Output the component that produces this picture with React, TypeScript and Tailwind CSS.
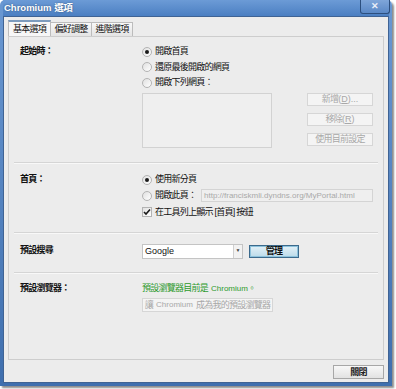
import type { ReactNode } from "react";

const font = "font-['Liberation_Sans','Noto_Sans_CJK_TC',sans-serif]";
// CJK glyphs in the reference have a ~8px advance
const cjk = "text-[9px] tracking-[-0.75px] leading-none";

function Radio({ checked, label }: { checked?: boolean; label: string }) {
  return (
    <div className="flex items-center gap-[3px] whitespace-nowrap">
      <span className="flex h-[10px] w-[10px] shrink-0 items-center justify-center rounded-full border border-[#b3b3b3] bg-gradient-to-br from-[#e0e0e0] to-[#ffffff]">
        {checked && <span className="h-[4px] w-[4px] rounded-full bg-[#1a1a1a]" />}
      </span>
      <span className={`${cjk} text-[#111]`}>{label}</span>
    </div>
  );
}

function DisabledButton({ children, className }: { children: ReactNode; className?: string }) {
  return (
    <div
      className={`flex items-center justify-center whitespace-nowrap border border-[#d6d6d6] bg-[#f4f4f4] text-[9px] leading-none text-[#a8a8a8] ${className ?? ""}`}
    >
      {children}
    </div>
  );
}

function Section({ label, children, className }: { label: string; children: ReactNode; className?: string }) {
  return (
    <div className={`flex pl-[11px] ${className ?? ""}`}>
      <div className="flex h-[15px] w-[122px] shrink-0 items-center whitespace-nowrap">
        <span className={`${cjk} font-bold text-[#111]`}>{label}</span>
      </div>
      <div className="flex flex-col">{children}</div>
    </div>
  );
}

function Divider() {
  return <div className="mx-[5px] h-[2px] border-t border-[#d5d5d5] border-b border-b-[#f8f8f8]" />;
}

function Tab({ label, active, className }: { label: string; active?: boolean; className?: string }) {
  return active ? (
    <div className={`flex h-[16px] items-center justify-center border border-b-0 border-[#bcbcbc] border-t-2 border-t-[#7c9bbd] bg-[#f7f7f7] ${className ?? ""}`}>
      <span className={`${cjk} text-[#111]`}>{label}</span>
    </div>
  ) : (
    <div className={`flex h-[14px] items-center justify-center border border-b-0 border-l-0 border-[#bcbcbc] bg-gradient-to-b from-[#f8f8f8] to-[#e4e4e4] ${className ?? ""}`}>
      <span className={`${cjk} text-[#111]`}>{label}</span>
    </div>
  );
}

export default function App() {
  return (
    <div className={`h-[389px] w-[396px] bg-white ${font}`}>
      <div className="flex h-[386px] w-[392px] flex-col rounded-t-[5px] bg-gradient-to-b from-[#6a98d2] to-[#3f6fae] px-[3px] pb-[3px] shadow-[2px_2px_2px_rgba(0,0,0,0.45)]">
        {/* title bar */}
        <div className="flex h-[16px] shrink-0 items-center justify-between bg-gradient-to-b from-[#6c9bd6] to-[#4b7fc2]">
          <span className="whitespace-nowrap pl-[1px] text-[9.5px] font-bold leading-none text-white [text-shadow:0_0_2px_rgba(0,0,0,0.4)]">
            Chromium <span className="tracking-[-0.5px]">選項</span>
          </span>
          <div className="mr-[-1px] flex h-[14px] w-[30px] items-center justify-center self-start rounded-b-[3px] border border-t-0 border-[#2c4f7e] bg-gradient-to-b from-[#7fa6d9] to-[#5a88c6] text-[9px] font-bold leading-none text-[#e8eef8]">
            ✕
          </div>
        </div>

        {/* body */}
        <div className="flex flex-1 flex-col border border-[#3f6394] bg-[#ececec] pl-[4px] pr-[4px] pt-[3px]">
          {/* tabs */}
          <div className="flex h-[16px] items-end whitespace-nowrap">
            <Tab label="基本選項" active className="w-[43px]" />
            <Tab label="偏好調整" className="w-[41px]" />
            <Tab label="進階選項" className="w-[41px]" />
          </div>

          {/* panel */}
          <div className="flex h-[324px] w-[376px] flex-col border border-[#cdcdcd] bg-[#ececec]">
            <Section label="起始時：" className="pt-[7px] pb-[14px]">
              <div className="flex h-[15px] items-center">
                <Radio checked label="開啟首頁" />
              </div>
              <div className="flex h-[16px] items-center">
                <Radio label="還原最後開啟的網頁" />
              </div>
              <div className="flex h-[15px] items-center">
                <Radio label="開啟下列網頁：" />
              </div>
              <div className="mt-[3px] flex">
                <div className="h-[55px] w-[130px] border border-[#d2d2d2] bg-[#efefef]" />
                <div className="ml-[35px] flex flex-col gap-[7px]">
                  <DisabledButton className="h-[13px] w-[66px]">
                    <span className="tracking-[-0.75px]">新增</span>(<u>D</u>)...
                  </DisabledButton>
                  <DisabledButton className="h-[13px] w-[66px]">
                    <span className="tracking-[-0.75px]">移除</span>(<u>R</u>)
                  </DisabledButton>
                  <DisabledButton className="h-[13px] w-[66px]">
                    <span className="tracking-[-0.75px]">使用目前設定</span>
                  </DisabledButton>
                </div>
              </div>
            </Section>
            <Divider />

            <Section label="首頁：" className="pt-[8px] pb-[12px]">
              <div className="flex h-[15px] items-center">
                <Radio checked label="使用新分頁" />
              </div>
              <div className="flex h-[17px] items-center">
                <div className="w-[59px]">
                  <Radio label="開啟此頁：" />
                </div>
                <div className="flex h-[13px] w-[172px] items-center overflow-hidden whitespace-nowrap border border-[#d4d4d4] bg-[#efefef] pl-[2px] text-[8px] leading-none text-[#a9a9a9]">
                  http://franciskmli.dyndns.org/MyPortal.html
                </div>
              </div>
              <div className="flex h-[16px] items-center gap-[3px] whitespace-nowrap">
                <span className="flex h-[10px] w-[10px] items-center justify-center border border-[#b3b3b3] bg-gradient-to-br from-[#e0e0e0] to-white">
                  <svg width="8" height="8" viewBox="0 0 8 8">
                    <path d="M1 4 L3 6 L7 1.5" stroke="#1a1a1a" strokeWidth="1.6" fill="none" />
                  </svg>
                </span>
                <span className={`${cjk} text-[#111]`}>在工具列上顯示 [首頁] 按鈕</span>
              </div>
            </Section>
            <Divider />

            <Section label="預設搜尋" className="pt-[9px] pb-[13px]">
              <div className="flex h-[16px] items-center">
                <div className="flex h-[15px] w-[101px] border border-[#c4c4c4] bg-white">
                  <span className="flex-1 pl-[2px] text-[9px] leading-[13px] text-[#111]">Google</span>
                  <span className="flex w-[9px] items-center justify-center border-l border-[#d0d0d0] bg-[#f2f2f2] text-[5px] text-[#444]">
                    ▼
                  </span>
                </div>
                <div className="ml-[6px] flex h-[13px] w-[50px] items-center justify-center border border-[#3c6a8c] bg-gradient-to-b from-[#e3f1f8] to-[#bcdbe9] shadow-[inset_0_0_0_1px_#8dc2dc]">
                  <span className={`${cjk} font-bold text-[#111]`}>管理</span>
                </div>
              </div>
            </Section>
            <Divider />

            <Section label="預設瀏覽器：" className="pt-[7px]">
              <div className="flex h-[15px] items-center whitespace-nowrap text-[#2d9a2d]">
                <span className={cjk}>預設瀏覽器目前是</span>
                <span className="ml-[3px] text-[8px] leading-none">Chromium。</span>
              </div>
              <DisabledButton className="mt-[2px] h-[14px] w-[131px]">
                <span className="tracking-[-0.75px]">讓</span>
                <span className="mx-[3px] text-[8px]">Chromium</span>
                <span className="tracking-[-0.75px]">成為我的預設瀏覽器</span>
              </DisabledButton>
            </Section>
          </div>

          {/* footer */}
          <div className="flex justify-end pt-[5px]">
            <div className="flex h-[14px] w-[51px] items-center justify-center border border-[#a7a7a7] bg-gradient-to-b from-[#f8f8f8] to-[#e2e2e2]">
              <span className={`${cjk} font-bold text-[#222]`}>關閉</span>
            </div>
          </div>
        </div>
      </div>
    </div>
  );
}
